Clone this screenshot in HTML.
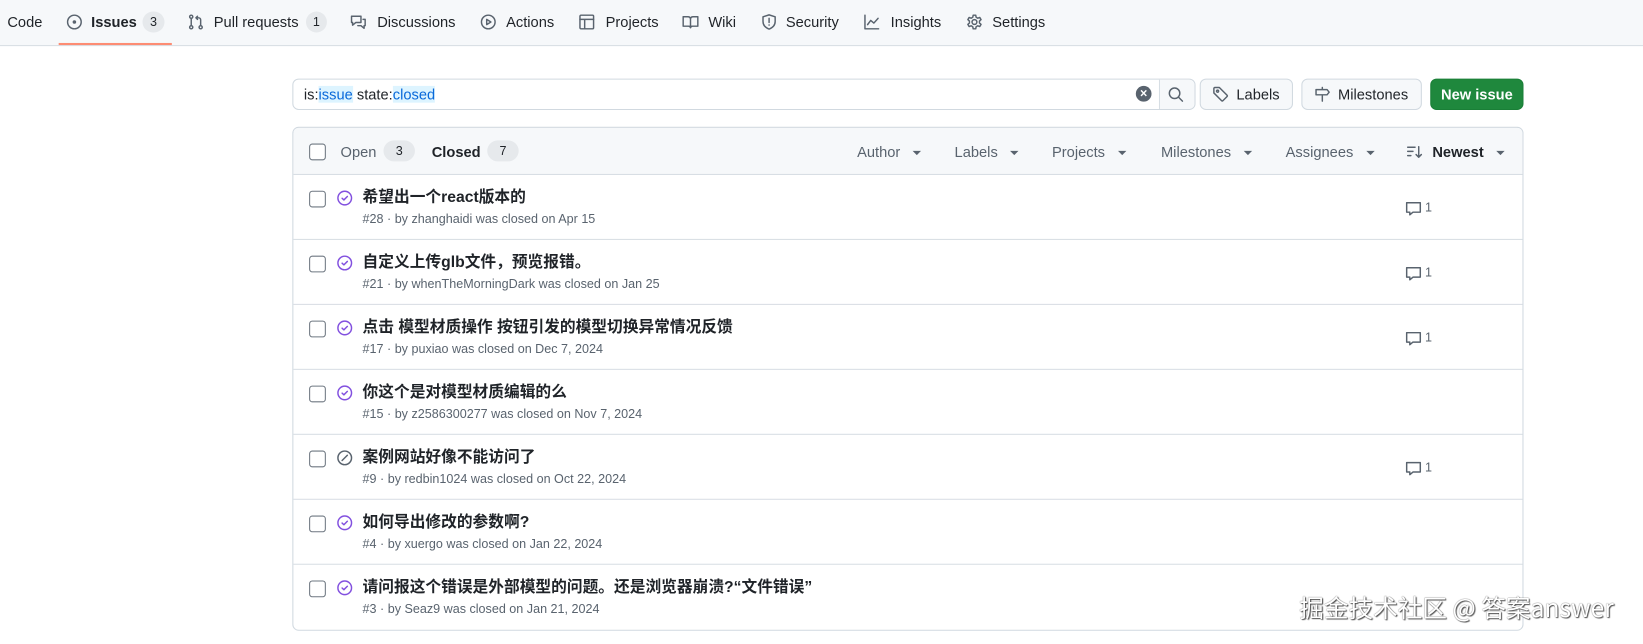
<!DOCTYPE html>
<html><head><meta charset="utf-8"><style>
*{box-sizing:border-box;margin:0;padding:0}
body{width:1643px;height:644px;background:#fff;font-family:"Liberation Sans","Noto Sans CJK SC",sans-serif;color:#1f2328;position:relative;overflow:hidden;font-size:14px}
#w{position:absolute;left:0;top:0;width:1568px;height:615px;transform:scale(1.0478);transform-origin:0 0}
.a{position:absolute;white-space:nowrap}
.nav{position:absolute;left:0;top:0;width:1568px;height:44px;background:#f6f8fa;border-bottom:1px solid #d8dee4}
.badge{position:absolute;height:20px;border-radius:10px;background:#e6e9ec;font-size:12px;text-align:center;line-height:20px;color:#1f2328}
svg.i{position:absolute;fill:none;stroke:#59636e;stroke-width:1.4;stroke-linecap:round;stroke-linejoin:round}
.cb{position:absolute;width:16px;height:16px;border:1px solid #6e7781;border-radius:3px;background:#fff}
.row{position:absolute;left:280px;width:1173px;height:62px;border-top:1px solid #d8dee4}
.t{position:absolute;left:66px;top:10px;font-size:15px;font-weight:bold;color:#1f2328}
.m{position:absolute;left:66px;top:35px;font-size:12px;color:#59636e}
.btn{position:absolute;top:75px;height:30px;border:1px solid #d1d9e0;border-radius:6px;background:#f6f8fa;font-size:14px;line-height:28px;color:#1f2328}
.f{position:absolute;top:137px;font-size:14px;color:#59636e}
.caret{display:inline-block;width:0;height:0;border-left:4px solid transparent;border-right:4px solid transparent;border-top:4px solid #59636e;margin-left:12px;vertical-align:2px}
</style></head><body><div id="w">
<div class="nav"></div>
<div class="a" style="left:7px;top:13px">Code</div>
<svg class="i" style="left:63px;top:13px" width="16" height="16" viewBox="0 0 16 16"><circle cx="8" cy="8" r="6.5"/><circle cx="8" cy="8" r="1" fill="#59636e"/></svg>
<div class="a" style="left:87px;top:13px;font-weight:bold">Issues</div>
<div class="badge" style="left:136px;top:11px;width:21px">3</div>
<div class="a" style="left:56px;top:41px;width:108px;height:2px;background:#fd8c73"></div>
<svg class="i" style="left:179px;top:13px" width="16" height="16" viewBox="0 0 16 16"><circle cx="3.5" cy="3" r="1.5"/><circle cx="3.5" cy="13" r="1.5"/><circle cx="12.5" cy="13" r="1.5"/><path d="M3.5 4.5v7M12.5 11.5V6a2 2 0 0 0-2-2H8M9.5 2.5 8 4l1.5 1.5"/></svg>
<div class="a" style="left:204px;top:13px">Pull requests</div>
<div class="badge" style="left:292px;top:11px;width:20px">1</div>
<svg class="i" style="left:334px;top:13px" width="16" height="16" viewBox="0 0 16 16"><path d="M1.5 2.5h9v6h-5l-3 2.5v-2.5h-1z"/><path d="M12.5 5.5h2v6h-1v2.5l-3-2.5h-3"/></svg>
<div class="a" style="left:360px;top:13px">Discussions</div>
<svg class="i" style="left:458px;top:13px" width="16" height="16" viewBox="0 0 16 16"><circle cx="8" cy="8" r="6.5"/><path d="M6.5 5.5v5l4-2.5z"/></svg>
<div class="a" style="left:483px;top:13px">Actions</div>
<svg class="i" style="left:552px;top:13px" width="16" height="16" viewBox="0 0 16 16"><rect x="1.5" y="1.5" width="13" height="13" rx="1"/><path d="M1.5 5.5h13M6 5.5v9"/></svg>
<div class="a" style="left:578px;top:13px">Projects</div>
<svg class="i" style="left:651px;top:13px" width="16" height="16" viewBox="0 0 16 16"><path d="M1 3h4.5a2.5 2.5 0 0 1 2.5 2v8.5a2 2 0 0 0-2-1.5H1zM15 3h-4.5A2.5 2.5 0 0 0 8 5v8.5a2 2 0 0 1 2-1.5h5z"/></svg>
<div class="a" style="left:676px;top:13px">Wiki</div>
<svg class="i" style="left:726px;top:13px" width="16" height="16" viewBox="0 0 16 16"><path d="M8 1.2 2.2 3v4.5c0 3.5 2.6 6 5.8 7.3 3.2-1.3 5.8-3.8 5.8-7.3V3z"/><path d="M8 4.5v4M8 10.8v.2"/></svg>
<div class="a" style="left:750px;top:13px">Security</div>
<svg class="i" style="left:824px;top:13px" width="16" height="16" viewBox="0 0 16 16"><path d="M1.5 1.5v13h13M4 10.5l3-4 3 2.5 4-4.5"/></svg>
<div class="a" style="left:850px;top:13px">Insights</div>
<svg class="i" style="left:922px;top:13px" width="16" height="16" viewBox="0 0 16 16"><circle cx="8" cy="8" r="2.3"/><path d="M6.8 1.5h2.4l.4 2 1.6.9 1.9-.7 1.2 2-1.5 1.4v1.8l1.5 1.4-1.2 2-1.9-.7-1.6.9-.4 2H6.8l-.4-2-1.6-.9-1.9.7-1.2-2 1.5-1.4V7.1L1.7 5.7l1.2-2 1.9.7 1.6-.9z"/></svg>
<div class="a" style="left:947px;top:13px">Settings</div>

<div class="a" style="left:279px;top:75px;width:862px;height:30px;border:1px solid #d1d9e0;border-radius:6px;background:#fff"></div>
<div class="a" style="left:1106px;top:76px;width:34px;height:28px;border-left:1px solid #d1d9e0;background:#f6f8fa;border-radius:0 6px 6px 0"></div>
<div class="a" style="left:290px;top:82px;font-size:14px">is:<span style="color:#0969da;background:#ddf4ff">issue</span> state:<span style="color:#0969da;background:#ddf4ff">closed</span></div>
<div class="a" style="left:1084px;top:82px;width:15px;height:15px;border-radius:50%;background:#59636e;color:#fff;font-size:12px;line-height:15px;text-align:center;font-weight:bold">×</div>
<svg class="i" style="left:1114px;top:82px" width="16" height="16" viewBox="0 0 16 16"><circle cx="7" cy="7" r="5"/><path d="M10.7 10.7 14.5 14.5"/></svg>
<div class="btn" style="left:1145px;width:89px"><svg class="i" style="left:11px;top:6px" width="16" height="16" viewBox="0 0 16 16"><path d="M1.5 2.5v4.2l7.3 7.3a1 1 0 0 0 1.4 0l3.8-3.8a1 1 0 0 0 0-1.4L6.7 1.5H2.5a1 1 0 0 0-1 1z"/><circle cx="5" cy="5" r="1"/></svg><span style="position:absolute;left:34px">Labels</span></div>
<div class="btn" style="left:1242px;width:115px"><svg class="i" style="left:11px;top:6px" width="16" height="16" viewBox="0 0 16 16"><path d="M8 1.5v2M8 9.5v5M2 3.5h10.5l2 2.5-2 2.5H2z"/></svg><span style="position:absolute;left:34px">Milestones</span></div>
<div class="a" style="left:1365px;top:75px;width:89px;height:30px;border-radius:6px;background:#1f883d;border:1px solid #1a7f37;color:#fff;font-weight:bold;font-size:14px;line-height:28px;text-align:center">New issue</div>

<div class="a" style="left:279px;top:121px;width:1175px;height:481px;border:1px solid #d1d9e0;border-radius:6px;overflow:hidden">
<div style="position:absolute;left:0;top:0;width:100%;height:45px;background:#f6f8fa"></div>
</div>
<div class="cb" style="left:295px;top:137px"></div>
<div class="a" style="left:325px;top:137px;color:#59636e">Open</div>
<div class="badge" style="left:366px;top:134px;width:30px">3</div>
<div class="a" style="left:412px;top:137px;font-weight:bold">Closed</div>
<div class="badge" style="left:465px;top:134px;width:30px">7</div>
<div class="f" style="left:818px">Author<span class="caret"></span></div>
<div class="f" style="left:911px">Labels<span class="caret"></span></div>
<div class="f" style="left:1004px">Projects<span class="caret"></span></div>
<div class="f" style="left:1108px">Milestones<span class="caret"></span></div>
<div class="f" style="left:1227px">Assignees<span class="caret"></span></div>
<svg class="i" style="left:1342px;top:137px" width="16" height="16" viewBox="0 0 16 16"><path d="M1.5 3.5h7M1.5 7.5h5M1.5 11.5h3M12 3v10M9.5 10.5 12 13l2.5-2.5"/></svg>
<div class="f" style="left:1367px;color:#1f2328;font-weight:bold">Newest<span class="caret"></span></div>

<div class="row" style="top:166px"><div class="cb" style="left:15px;top:15px"></div><svg class="i" style="left:41px;top:14px;stroke:#8250df" width="16" height="16" viewBox="0 0 16 16"><circle cx="8" cy="8" r="6.5"/><path d="M5.5 8.2 7.2 9.8 10.5 6.5"/></svg><div class="t">希望出一个react版本的</div><div class="m">#28 · by zhanghaidi was closed on Apr 15</div><svg class="i" style="left:1061px;top:24px" width="16" height="16" viewBox="0 0 16 16"><path d="M1.5 2.5h13v9h-7l-3 2.5v-2.5h-3z"/></svg><div class="a" style="left:1080px;top:24px;font-size:12px;color:#59636e">1</div></div>
<div class="row" style="top:228px"><div class="cb" style="left:15px;top:15px"></div><svg class="i" style="left:41px;top:14px;stroke:#8250df" width="16" height="16" viewBox="0 0 16 16"><circle cx="8" cy="8" r="6.5"/><path d="M5.5 8.2 7.2 9.8 10.5 6.5"/></svg><div class="t">自定义上传glb文件，预览报错。</div><div class="m">#21 · by whenTheMorningDark was closed on Jan 25</div><svg class="i" style="left:1061px;top:24px" width="16" height="16" viewBox="0 0 16 16"><path d="M1.5 2.5h13v9h-7l-3 2.5v-2.5h-3z"/></svg><div class="a" style="left:1080px;top:24px;font-size:12px;color:#59636e">1</div></div>
<div class="row" style="top:290px"><div class="cb" style="left:15px;top:15px"></div><svg class="i" style="left:41px;top:14px;stroke:#8250df" width="16" height="16" viewBox="0 0 16 16"><circle cx="8" cy="8" r="6.5"/><path d="M5.5 8.2 7.2 9.8 10.5 6.5"/></svg><div class="t">点击 模型材质操作 按钮引发的模型切换异常情况反馈</div><div class="m">#17 · by puxiao was closed on Dec 7, 2024</div><svg class="i" style="left:1061px;top:24px" width="16" height="16" viewBox="0 0 16 16"><path d="M1.5 2.5h13v9h-7l-3 2.5v-2.5h-3z"/></svg><div class="a" style="left:1080px;top:24px;font-size:12px;color:#59636e">1</div></div>
<div class="row" style="top:352px"><div class="cb" style="left:15px;top:15px"></div><svg class="i" style="left:41px;top:14px;stroke:#8250df" width="16" height="16" viewBox="0 0 16 16"><circle cx="8" cy="8" r="6.5"/><path d="M5.5 8.2 7.2 9.8 10.5 6.5"/></svg><div class="t">你这个是对模型材质编辑的么</div><div class="m">#15 · by z2586300277 was closed on Nov 7, 2024</div></div>
<div class="row" style="top:414px"><div class="cb" style="left:15px;top:15px"></div><svg class="i" style="left:41px;top:14px" width="16" height="16" viewBox="0 0 16 16"><circle cx="8" cy="8" r="6.5"/><path d="M5.5 10.5 10.5 5.5"/></svg><div class="t">案例网站好像不能访问了</div><div class="m">#9 · by redbin1024 was closed on Oct 22, 2024</div><svg class="i" style="left:1061px;top:24px" width="16" height="16" viewBox="0 0 16 16"><path d="M1.5 2.5h13v9h-7l-3 2.5v-2.5h-3z"/></svg><div class="a" style="left:1080px;top:24px;font-size:12px;color:#59636e">1</div></div>
<div class="row" style="top:476px"><div class="cb" style="left:15px;top:15px"></div><svg class="i" style="left:41px;top:14px;stroke:#8250df" width="16" height="16" viewBox="0 0 16 16"><circle cx="8" cy="8" r="6.5"/><path d="M5.5 8.2 7.2 9.8 10.5 6.5"/></svg><div class="t">如何导出修改的参数啊?</div><div class="m">#4 · by xuergo was closed on Jan 22, 2024</div></div>
<div class="row" style="top:538px"><div class="cb" style="left:15px;top:15px"></div><svg class="i" style="left:41px;top:14px;stroke:#8250df" width="16" height="16" viewBox="0 0 16 16"><circle cx="8" cy="8" r="6.5"/><path d="M5.5 8.2 7.2 9.8 10.5 6.5"/></svg><div class="t">请问报这个错误是外部模型的问题。还是浏览器崩溃?“文件错误”</div><div class="m">#3 · by Seaz9 was closed on Jan 21, 2024</div></div>

<div class="a" style="left:1240px;top:565px;font-size:23.5px;color:#fff;text-shadow:0 0 1px #333,1px 1px 1px #555;font-family:'Noto Sans CJK SC','Liberation Sans',sans-serif;line-height:1.2">掘金技术社区 @ 答案answer</div>
</div></body></html>
